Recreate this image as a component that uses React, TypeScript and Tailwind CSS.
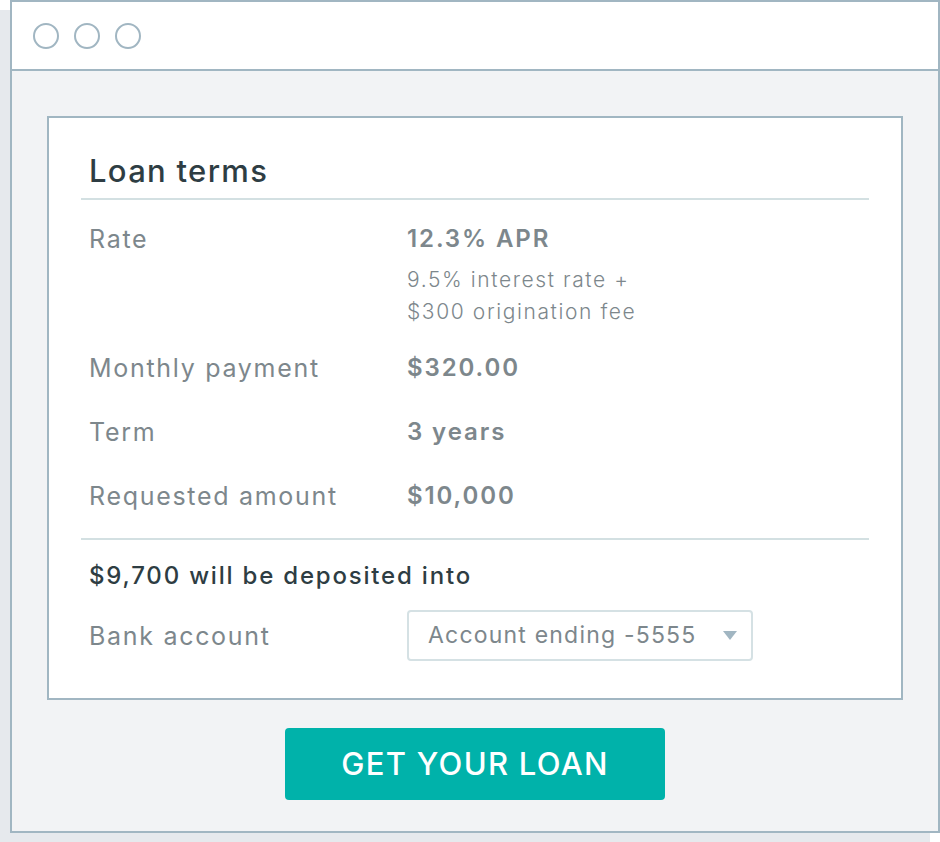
export default function App() {
  const font = { fontFamily: 'Inter, "Liberation Sans", sans-serif' };

  return (
    <div className="min-h-screen bg-white" style={font}>
      <div className="ml-[10px] w-[930px] h-[833px] flex flex-col border-2 border-[#a1b6c2] bg-[#f2f3f5] shadow-[-10px_10px_0_0_#e6e9ed]">
        {/* window bar */}
        <div className="h-[69px] shrink-0 flex items-center gap-[15px] pl-[21px] bg-white border-b-2 border-[#a1b6c2]">
          <span className="w-[26px] h-[26px] rounded-full border-2 border-[#a1b6c2]" />
          <span className="w-[26px] h-[26px] rounded-full border-2 border-[#a1b6c2]" />
          <span className="w-[26px] h-[26px] rounded-full border-2 border-[#a1b6c2]" />
        </div>

        <div className="flex flex-col items-center pt-[45px]">
          {/* loan card */}
          <div className="w-[856px] bg-white border-2 border-[#a1b6c2] px-[32px] pt-[33px] pb-[37px]">
            <h1 className="px-2 text-[31px] leading-[40px] font-medium tracking-[1.3px] text-[#2e3d43] pb-[7px] border-b-2 border-[#d3e0e2]">
              Loan terms
            </h1>

            <div className="px-2 pt-[23px] pb-[26px] border-b-2 border-[#d3e0e2]">
              <div className="flex">
                <div className="w-[318px] text-[25px] leading-[32px] tracking-[1.7px] text-[#7d878c]">Rate</div>
                <div>
                  <div className="text-[24px] leading-[32px] font-semibold tracking-[1.9px] text-[#7d878c]">12.3% APR</div>
                  <div className="mt-[9px] text-[21px] leading-[32px] font-light tracking-[1.6px] text-[#7d878c]">
                    9.5% interest rate +
                    <br />
                    $300 origination fee
                  </div>
                </div>
              </div>
              <div className="flex mt-[24px]">
                <div className="w-[318px] text-[25px] leading-[32px] tracking-[1.7px] text-[#7d878c]">Monthly payment</div>
                <div className="text-[24px] leading-[32px] font-semibold tracking-[1.9px] text-[#7d878c]">$320.00</div>
              </div>
              <div className="flex mt-[32px]">
                <div className="w-[318px] text-[25px] leading-[32px] tracking-[1.7px] text-[#7d878c]">Term</div>
                <div className="text-[24px] leading-[32px] font-semibold tracking-[1.9px] text-[#7d878c]">3 years</div>
              </div>
              <div className="flex mt-[32px]">
                <div className="w-[318px] text-[25px] leading-[32px] tracking-[1.7px] text-[#7d878c]">Requested amount</div>
                <div className="text-[24px] leading-[32px] font-semibold tracking-[1.9px] text-[#7d878c]">$10,000</div>
              </div>
            </div>

            <div className="px-2 pt-[20px]">
              <div className="text-[24px] leading-[32px] font-medium tracking-[1.8px] text-[#2e3d43]">$9,700 will be deposited into</div>
              <div className="flex items-center mt-[18px]">
                <div className="w-[318px] text-[25px] leading-[32px] tracking-[1.7px] text-[#7d878c]">Bank account</div>
                <div className="w-[346px] h-[51px] flex items-center justify-between pl-[19px] pr-[14px] border-2 border-[#d5e1e4] rounded-[4px]">
                  <span className="text-[23px] tracking-[1.2px] text-[#7d878c]">Account ending -5555</span>
                  <svg width="14" height="9" viewBox="0 0 14 9">
                    <path d="M0 0h14L7 9z" fill="#a1b6c2" />
                  </svg>
                </div>
              </div>
            </div>
          </div>

          <button className="mt-[28px] w-[380px] h-[72px] rounded-[4px] bg-[#00b2aa] text-white text-[31px] font-medium tracking-[1.3px]">
            GET YOUR LOAN
          </button>
        </div>
      </div>
    </div>
  );
}
